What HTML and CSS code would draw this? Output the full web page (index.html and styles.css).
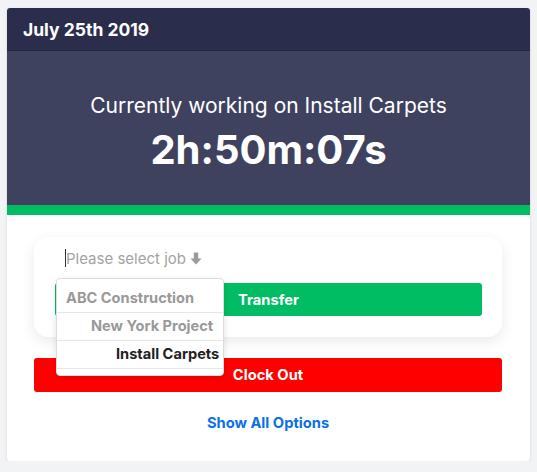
FILE: index.html
```html
<!DOCTYPE html>
<html>
<head>
<meta charset="utf-8">
<link rel="stylesheet" href="styles.css">
</head>
<body>
<div class="card">
  <div class="card-header">July 25th 2019</div>
  <div class="hero">
    <div class="hero-label">Currently working on Install Carpets</div>
    <div class="hero-timer">2h:50m:07s</div>
  </div>
  <div class="progress"></div>
  <div class="card-body">
    <div class="panel">
      <div class="select">
        <span class="caret"></span>
        <span class="placeholder">Please select job</span>
        <svg class="arrow" width="12" height="13" viewBox="0 0 12 13"><path d="M3.8 0.5h4.4v6h3.3L6 12.5 0.5 6.5h3.3z" fill="#9b9b9b"/></svg>
      </div>
      <button class="btn btn-transfer">Transfer</button>
      <ul class="dropdown">
        <li class="opt lvl0">ABC Construction</li>
        <li class="opt lvl1">New York Project</li>
        <li class="opt lvl2">Install Carpets</li>
      </ul>
    </div>
    <button class="btn btn-clockout">Clock Out</button>
    <div class="more"><a class="more-link">Show All Options</a></div>
  </div>
</div>
</body>
</html>
```
FILE: styles.css
```css
* { box-sizing: border-box; }
html, body { margin: 0; padding: 0; }
body {
  background: #f2f3f5;
  font-family: Inter, "Open Sans", sans-serif;
  padding: 8px 7px 0 7px;
}
.card {
  width: 523px;
  height: 453px;
  background: #fff;
  border-radius: 3px;
  overflow: hidden;
  box-shadow: 0 1px 3px rgba(0,0,0,0.12);
}
.card-header {
  height: 43px;
  background: #2a2d4b;
  border-bottom: 1px solid #24273f;
  color: #fff;
  font-weight: 700;
  font-size: 17.5px;
  display: flex;
  align-items: center;
  padding-left: 16px;
  padding-top: 1px;
}
.hero {
  height: 154px;
  background: #3f425f;
  color: #fff;
  text-align: center;
  padding-top: 42px;
}
.hero-label {
  font-size: 21px;
  line-height: 26px;
}
.hero-timer {
  font-size: 40px;
  font-weight: 700;
  line-height: 48px;
  margin-top: 7px;
}
.progress {
  height: 10px;
  background: #00bd63;
}
.card-body {
  padding: 22px 28px 0 27px;
}
.panel {
  position: relative;
  height: 100px;
  border-radius: 14px;
  background: #fff;
  box-shadow: 0 4px 14px rgba(0,0,0,0.09);
  padding: 3px 20px 0 21px;
}
.select {
  height: 36px;
  display: flex;
  align-items: center;
  padding-left: 10px;
  margin-bottom: 7px;
  color: #a3a3a3;
  font-size: 15px;
}
.caret {
  width: 1px;
  height: 18px;
  background: #333;
}
.placeholder { margin-right: 4px; }
.arrow { display: block; }
.btn {
  display: block;
  width: 100%;
  border: none;
  color: #fff;
  font-family: inherit;
  font-weight: 700;
  font-size: 14.7px;
  border-radius: 3px;
  padding: 0;
}
.btn-transfer {
  height: 33px;
  background: #00bd63;
}
.btn-clockout {
  height: 34px;
  background: #ff0000;
  margin-top: 21px;
}
.dropdown {
  position: absolute;
  left: 22px;
  top: 41px;
  width: 168px;
  margin: 0;
  padding: 6px 0;
  list-style: none;
  background: #fff;
  border: 1px solid #dcdcdc;
  border-radius: 4px;
  box-shadow: 0 2px 6px rgba(0,0,0,0.12);
}
.opt {
  height: 28px;
  line-height: 27px;
  border-bottom: 1px solid #e6e6e6;
  font-size: 14.6px;
  font-weight: 700;
  color: #999;
  white-space: nowrap;
}
.lvl0 { padding-left: 9px; }
.lvl1 { padding-left: 34px; }
.lvl2 { padding-left: 59px; color: #222; }
.more {
  text-align: center;
  margin-top: 20px;
}
.more-link {
  color: #0b6fe6;
  font-weight: 700;
  font-size: 14.7px;
  line-height: 20px;
  cursor: pointer;
}
```
